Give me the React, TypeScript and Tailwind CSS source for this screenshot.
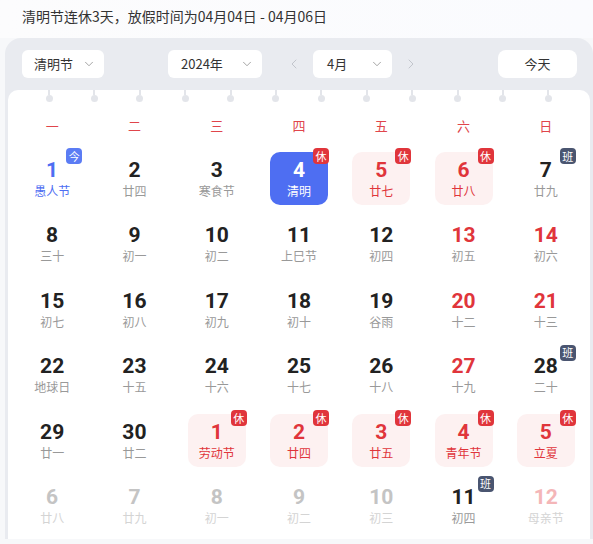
import { ChevronDown, ChevronLeft, ChevronRight } from 'lucide-react'

type Day = {
  n: number
  lunar: string
  kind?: 'today' | 'selected' | 'holiday' | 'weekend' | 'other' | 'otherWeekend'
  badge?: '今' | '休' | '班'
}

const weeks: Day[][] = [
  [
    { n: 1, lunar: '愚人节', kind: 'today', badge: '今' },
    { n: 2, lunar: '廿四' },
    { n: 3, lunar: '寒食节' },
    { n: 4, lunar: '清明', kind: 'selected', badge: '休' },
    { n: 5, lunar: '廿七', kind: 'holiday', badge: '休' },
    { n: 6, lunar: '廿八', kind: 'holiday', badge: '休' },
    { n: 7, lunar: '廿九', badge: '班' },
  ],
  [
    { n: 8, lunar: '三十' },
    { n: 9, lunar: '初一' },
    { n: 10, lunar: '初二' },
    { n: 11, lunar: '上巳节' },
    { n: 12, lunar: '初四' },
    { n: 13, lunar: '初五', kind: 'weekend' },
    { n: 14, lunar: '初六', kind: 'weekend' },
  ],
  [
    { n: 15, lunar: '初七' },
    { n: 16, lunar: '初八' },
    { n: 17, lunar: '初九' },
    { n: 18, lunar: '初十' },
    { n: 19, lunar: '谷雨' },
    { n: 20, lunar: '十二', kind: 'weekend' },
    { n: 21, lunar: '十三', kind: 'weekend' },
  ],
  [
    { n: 22, lunar: '地球日' },
    { n: 23, lunar: '十五' },
    { n: 24, lunar: '十六' },
    { n: 25, lunar: '十七' },
    { n: 26, lunar: '十八' },
    { n: 27, lunar: '十九', kind: 'weekend' },
    { n: 28, lunar: '二十', badge: '班' },
  ],
  [
    { n: 29, lunar: '廿一' },
    { n: 30, lunar: '廿二' },
    { n: 1, lunar: '劳动节', kind: 'holiday', badge: '休' },
    { n: 2, lunar: '廿四', kind: 'holiday', badge: '休' },
    { n: 3, lunar: '廿五', kind: 'holiday', badge: '休' },
    { n: 4, lunar: '青年节', kind: 'holiday', badge: '休' },
    { n: 5, lunar: '立夏', kind: 'holiday', badge: '休' },
  ],
  [
    { n: 6, lunar: '廿八', kind: 'other' },
    { n: 7, lunar: '廿九', kind: 'other' },
    { n: 8, lunar: '初一', kind: 'other' },
    { n: 9, lunar: '初二', kind: 'other' },
    { n: 10, lunar: '初三', kind: 'other' },
    { n: 11, lunar: '初四', badge: '班' },
    { n: 12, lunar: '母亲节', kind: 'otherWeekend' },
  ],
]

const weekdays = ['一', '二', '三', '四', '五', '六', '日']

function styleFor(kind?: Day['kind']) {
  switch (kind) {
    case 'today':
      return { box: '', num: 'text-[#4e6ef2]', lunar: 'text-[#4e6ef2]' }
    case 'selected':
      return { box: 'bg-[#4e6ef2]', num: 'text-white', lunar: 'text-white' }
    case 'holiday':
      return { box: 'bg-[#fdf1f1]', num: 'text-[#e0353b]', lunar: 'text-[#e0353b]' }
    case 'weekend':
      return { box: '', num: 'text-[#e0353b]', lunar: 'text-[#999]' }
    case 'other':
      return { box: '', num: 'text-[#c4c4c4]', lunar: 'text-[#d4d4d4]' }
    case 'otherWeekend':
      return { box: '', num: 'text-[#f4b6b8]', lunar: 'text-[#d4d4d4]' }
    default:
      return { box: '', num: 'text-[#222]', lunar: 'text-[#999]' }
  }
}

function Badge({ label }: { label: '今' | '休' | '班' }) {
  const bg = label === '今' ? 'bg-[#5b7cf4]' : label === '休' ? 'bg-[#e0353b]' : 'bg-[#4a5570]'
  return (
    <span
      className={`absolute -top-[4px] -right-[1px] flex h-[16px] w-[16px] items-center justify-center rounded-[4px] text-[11px] leading-none text-white ${bg}`}
    >
      {label}
    </span>
  )
}

function Cell({ day }: { day: Day }) {
  const s = styleFor(day.kind)
  return (
    <div className="flex h-[65.5px] items-center justify-center">
      <div className={`relative flex h-[53px] w-[58px] flex-col items-center justify-center rounded-[10px] ${s.box}`}>
        <span className={`font-['Roboto',sans-serif] text-[21px] font-bold leading-[24px] ${s.num}`}>{day.n}</span>
        <span className={`text-[12px] leading-[18px] ${s.lunar}`}>{day.lunar}</span>
        {day.badge && <Badge label={day.badge} />}
      </div>
    </div>
  )
}

function Select({ label, width, textPad }: { label: string; width: string; textPad: string }) {
  return (
    <div className={`flex h-[28px] items-center justify-between rounded-[6px] bg-white pr-[8px] ${width} ${textPad}`}>
      <span className="text-[13px] text-[#333]">{label}</span>
      <ChevronDown size={14} strokeWidth={1.3} className="text-[#888]" />
    </div>
  )
}

export default function App() {
  return (
    <div className="h-[544px] w-[593px] overflow-hidden bg-[#f7f8fa] font-['Noto_Sans_CJK_SC','Noto_Sans',sans-serif]">
      <div className="flex h-[38px] items-center bg-gradient-to-r from-[#fcfcfd] to-[#fafbfe] pb-[6px] pl-[22px] text-[14px] text-[#333]">
        清明节连休3天，放假时间为04月04日 - 04月06日
      </div>

      <div className="ml-[5px] rounded-t-[16px] bg-[#e9ebf0] pt-[12px]">
        <div className="flex items-center pl-[17px] pr-[16px]">
          <Select label="清明节" width="w-[82px]" textPad="pl-[12px]" />
          <div className="ml-[64px]">
            <Select label="2024年" width="w-[94px]" textPad="pl-[13px]" />
          </div>
          <ChevronLeft size={16} strokeWidth={1.5} className="ml-[24px] text-[#c2c5cc]" />
          <div className="ml-[11px]">
            <Select label="4月" width="w-[79px]" textPad="pl-[14px]" />
          </div>
          <ChevronRight size={16} strokeWidth={1.5} className="ml-[11px] text-[#c2c5cc]" />
          <div className="ml-auto flex h-[28px] w-[79px] items-center justify-center rounded-[8px] bg-white text-[13px] text-[#333]">
            今天
          </div>
        </div>

        <div className="mx-[3px] mt-[12px] rounded-t-[10px] bg-white px-[3px]">
          <div className="flex h-[16px] gap-[38.4px] pl-[34.5px]">
            {Array.from({ length: 12 }).map((_, i) => (
              <div key={i} className="flex w-[7px] flex-col items-center">
                <div className="h-[5px] w-[2px] bg-[#e3e5ea]" />
                <div className="h-[7px] w-[7px] rounded-full bg-[#e3e5ea]" />
              </div>
            ))}
          </div>

          <div className="grid h-[40px] grid-cols-7 items-center">
            {weekdays.map((w) => (
              <div key={w} className="text-center text-[13px] text-[#e0454b]">
                {w}
              </div>
            ))}
          </div>

          <div className="grid grid-cols-7">
            {weeks.flat().map((d, i) => (
              <Cell key={i} day={d} />
            ))}
          </div>
        </div>
      </div>
    </div>
  )
}
